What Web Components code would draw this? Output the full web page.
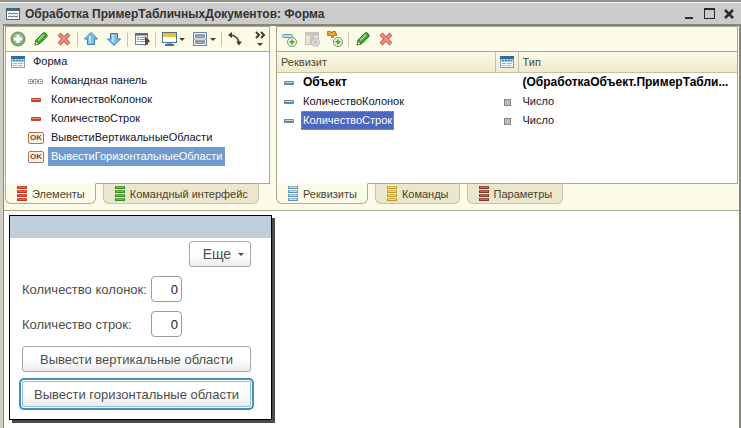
<!DOCTYPE html>
<html lang="ru">
<head>
<meta charset="utf-8">
<title>Обработка ПримерТабличныхДокументов: Форма</title>
<style>
  body {
    margin: 0;
    font-family: "Liberation Sans", Arial, sans-serif;
    font-size: 11px;
    background-color: #ffffff;
  }
</style>
</head>
<body>
<designer-window></designer-window>

<script>
const bars = (light, dark) => [1, 5, 9, 13].map(y =>
  `<rect x="3" y="${y - 1}" width="10" height="3" rx=".5" fill="${dark}"/>
   <rect x="4" y="${y - 0.5}" width="8" height="1.500" fill="${light}"/>`).join('')

const pencil = `
  <path d="M2 14l1-5 7-7q1.500-1 3 0.500t1 3L7 12.500z" fill="#3fa52c" stroke="#2b7420"/>
  <path d="M5 9.500l6-6" stroke="#8bdc6c" stroke-width="2"/>
  <path d="M2 14l1-4 3 3z" fill="#f4efcf" stroke="#2b7420" stroke-width=".7"/>`

const plus = `
  <circle cx="11" cy="11" r="4.500" fill="#eef5e4" stroke="#6f9668"/>
  <path d="M11 8.500v5M8.500 11h5" stroke="#5fae4b" stroke-width="2"/>`

const icons = {
  window: `<rect x="1.500" y="2.500" width="13" height="11" fill="#fff" stroke="#44667f"/>
    <path d="M2 4h12" stroke="#44667f" stroke-width="2"/>
    <path d="M3 8l2-1 2 1 2-1 2 1 2-1M3 11l2-1 2 1 2-1 2 1 2-1" fill="none" stroke="#44667f"/>`,
  form: `<rect x="1.500" y="2.500" width="13" height="11" fill="#f3f8fc" stroke="#7f9fbd"/>
    <rect x="1" y="2" width="14" height="3" fill="#316a9b"/>
    <rect x="2" y="5" width="12" height="3" fill="#a5c8e6"/>
    <path d="M3 6.500h10" stroke="#3977a8" stroke-dasharray="2 1"/>
    <path d="M3 9.500h4M8 9.500h5M3 11.500h4M8 11.500h4" stroke="#9ab4c9"/>`,
  add: `<circle cx="8" cy="8" r="7" fill="#83ad78" stroke="#68865f"/>
    <circle cx="8" cy="7" r="5" fill="#9bc391"/>
    <path d="M8 4v8M4 8h8" stroke="#fff" stroke-width="3"/>`,
  edit: pencil,
  remove: `<path d="M3 3l10 10M13 3L3 13" stroke="#cb5547" stroke-width="4"/>
    <path d="M3 3l10 10M13 3L3 13" stroke="#f09486" stroke-width="2"/>`,
  up: `<path d="M8 1.500l6.500 6.500h-3v5.500h-7V8h-3z" fill="#79bfe8" stroke="#397da9"/><path d="M7 5v7" stroke="#b9e2f6" stroke-width="2"/>`,
  down: `<path d="M8 14.500L14.500 8h-3V2.500h-7V8h-3z" fill="#79bfe8" stroke="#397da9"/><path d="M7 4v7" stroke="#b9e2f6" stroke-width="2"/>`,
  list: `<rect x="1.500" y="2.500" width="12" height="11" fill="#fff" stroke="#6b8299"/>
    <path d="M1 3.500h13" stroke="#4b6780" stroke-width="2"/>
    <path d="M3 6.500h2M6 6.500h6M3 8.500h2M6 8.500h6M3 10.500h2M6 10.500h6" stroke="#7b93aa"/>
    <path d="M11 5l5 5-5 5z" fill="#64442f"/>`,
  screen: `<rect x="1.500" y="1.500" width="14" height="10" fill="#fff" stroke="#526f8b"/>
    <rect x="2" y="2" width="13" height="4" fill="#e8c540"/>
    <path d="M6 12h5v1H6z" fill="#8aa6bd"/><path d="M4 14h9" stroke="#39739d" stroke-width="2"/>`,
  split: `<rect x="1.500" y="1.500" width="13" height="13" fill="#eef4f8" stroke="#7189a1"/>
    <rect x="3" y="3" width="10" height="4" fill="#9b9da8"/><rect x="3" y="9" width="10" height="4" fill="#9b9da8"/>
    <path d="M2 8h12" stroke="#a5b6c6"/>`,
  order: `<path d="M4 4q7 1 8 8" fill="none" stroke="#443c2d" stroke-width="1.500"/>
    <path d="M1 4l4-3v6zM12 14.500l-3-4h6z" fill="#443c2d"/>`,
  addAttribute: `<rect x="1.500" y="3.500" width="10" height="3" rx="1" fill="#c4dced" stroke="#6f94b3"/>${plus}`,
  addColumn: `<g opacity=".65"><rect x="1.500" y="1.500" width="13" height="12" fill="#dcd9d3" stroke="#aaa7a8"/>
    <path d="M2 3h12" stroke="#aaa" stroke-width="3"/><rect x="6" y="2" width="4" height="11" fill="#b4a6ad"/>
    <circle cx="11.500" cy="11.500" r="4" fill="#ddd" stroke="#999"/><path d="M11.500 9v5M9 11.500h5" stroke="#aaa" stroke-width="2"/></g>`,
  addParameter: `<path d="M.5 .5h3v1h2v-1h3v2h1v2h-3v2h-2v-2h-4v-1h1v-1h-1z" fill="#e9ac2c" stroke="#bf7415"/>${plus}`,
  panel: `<g fill="#f2f2f2" stroke="#8a8a8a"><rect x=".5" y="6.500" width="4" height="4" rx="1"/><rect x="5.500" y="6.500" width="4" height="4" rx="1"/><rect x="10.500" y="6.500" width="4" height="4" rx="1"/></g>
    <path d="M2 8.500h1M7 8.500h1M12 8.500h1" stroke="#666"/>`,
  field: `<rect x="3" y="6" width="10" height="4" rx="1" fill="#c14535"/><path d="M4 7.500h8" stroke="#f08c7c"/>`,
  attribute: `<rect x="3" y="6" width="10" height="4" rx="1" fill="#6388a8"/><path d="M4 7.500h8" stroke="#bfd6e6"/>`,
  square: `<rect x="5.500" y="5.500" width="6" height="6" fill="#bcbcbc" stroke="#858585"/>`,
  barsRed: bars('#f0604a', '#bf3426'),
  barsGreen: bars('#74c048', '#38832a'),
  barsBlue: bars('#c3e0ee', '#5f8fac'),
  barsYellow: bars('#f4d766', '#bd962f'),
  barsBrown: bars('#bd6d56', '#7c3a28'),
  more: `<path d="M6 1l3 3-3 3M11 1l3 3-3 3" fill="none" stroke="#443c2d" stroke-width="2"/><path d="M7 12h6l-3 3z" fill="#443c2d"/>`,
  minimize: `<path d="M4 12h8" stroke="#2b2b2b" stroke-width="2"/>`,
  maximize: `<rect x="3.500" y="3.500" width="10" height="9" fill="none" stroke="#2b2b2b"/><path d="M3 3h11" stroke="#2b2b2b" stroke-width="2"/>`,
  close: `<path d="M4 4l8 8M12 4l-8 8" stroke="#2b2b2b" stroke-width="2.500"/>`
}

class UiIcon extends HTMLElement {
  constructor () {
    super()
    this.shadow = this.attachShadow({ mode: 'open' })
  }

  connectedCallback () {
    this.shadow.innerHTML =
      /* html */`
      <style>
        :host {
          display: block;
          flex: none;
          width: 16px;
          height: 16px;
        }

        svg {
          display: block;
        }
      </style>
      <svg width="16" height="16" viewBox="0 0 16 16" fill="none" aria-hidden="true">${icons[this.getAttribute('name')]}</svg>
      `
  }
}

customElements.define('ui-icon', UiIcon)

class ToolButton extends HTMLElement {
  constructor () {
    super()
    this.shadow = this.attachShadow({ mode: 'open' })
  }

  connectedCallback () {
    this.shadow.innerHTML =
      /* html */`
      <style>
        :host {
          display: block;
          flex: none;
        }

        button {
          display: flex;
          align-items: center;
          gap: 2px;
          height: 24px;
          padding: 0 3px 0 4px;
          border: none;
          background: none;
        }

        .arrow {
          border: 3px solid transparent;
          border-top-color: #443c2d;
          border-bottom: none;
        }
      </style>
      <button type="button" aria-label="${this.getAttribute('label')}">
        <ui-icon name="${this.getAttribute('icon')}"></ui-icon>
        ${this.hasAttribute('menu') ? '<span class="arrow"></span>' : ''}
      </button>
      `
  }
}

customElements.define('tool-button', ToolButton)

class ToolBar extends HTMLElement {
  constructor () {
    super()
    this.shadow = this.attachShadow({ mode: 'open' })
  }

  connectedCallback () {
    this.shadow.innerHTML =
      /* html */`
      <style>
        :host {
          display: flex;
          align-items: center;
          height: 24px;
          border-bottom: 1px solid #aaa78f;
          background-color: #fcfbea;
        }

        ::slotted(hr) {
          width: 1px;
          height: 15px;
          margin: 0 2px;
          border: none;
          background-color: #c9c6b0;
        }

        ::slotted(.last) {
          margin-left: auto;
        }
      </style>
      <slot></slot>
      `
  }
}

customElements.define('tool-bar', ToolBar)

class ElementTree extends HTMLElement {
  constructor () {
    super()
    this.shadow = this.attachShadow({ mode: 'open' })

    this.data = [
      { icon: 'panel', name: 'Командная панель' },
      { icon: 'field', name: 'КоличествоКолонок' },
      { icon: 'field', name: 'КоличествоСтрок' },
      { icon: 'ok', name: 'ВывестиВертикальныеОбласти' },
      { icon: 'ok', name: 'ВывестиГоризонтальныеОбласти', selected: true }
    ]
  }

  connectedCallback () {
    this.shadow.innerHTML =
      /* html */`
      <style>
        :host {
          display: block;
          color: #14142a;
        }

        ul {
          margin: 0;
          padding: 0;
          list-style: none;
        }

        ul ul {
          padding-left: 18px;
        }

        .item {
          display: flex;
          align-items: center;
          gap: 4px;
          height: 19px;
          padding-left: 4px;
        }

        .name {
          padding: 0 3px;
          line-height: 19px;
          white-space: nowrap;
        }

        .selected {
          background-color: #6f9bd1;
          color: #ffffff;
        }

        .ok {
          box-sizing: border-box;
          width: 16px;
          height: 12px;
          border: 1px solid #a5785f;
          border-radius: 2px;
          background-color: #fdf1e4;
          color: #7a4630;
          font-size: 8px;
          font-weight: bold;
          line-height: 10px;
          text-align: center;
        }
      </style>
      <ul role="tree">
        <li role="treeitem" aria-expanded="true">
          <div class="item"><ui-icon name="form"></ui-icon><span class="name">Форма</span></div>
          <ul role="group"></ul>
        </li>
      </ul>
      `

    const group = this.shadow.querySelector('ul ul')

    this.data.forEach(node => {
      const item = document.createElement('li')
      item.className = 'item'
      item.setAttribute('role', 'treeitem')

      if (node.icon === 'ok') {
        item.innerHTML = '<span class="ok">OK</span>'
      } else {
        item.innerHTML = `<ui-icon name="${node.icon}"></ui-icon>`
      }

      const name = document.createElement('span')
      name.className = 'name'
      name.textContent = node.name
      if (node.selected) {
        name.classList.add('selected')
        item.setAttribute('aria-selected', 'true')
      }
      item.appendChild(name)
      group.appendChild(item)
    })
  }
}

customElements.define('element-tree', ElementTree)

class AttributeTable extends HTMLElement {
  constructor () {
    super()
    this.shadow = this.attachShadow({ mode: 'open' })

    this.data = [
      { name: 'Объект', type: '(ОбработкаОбъект.ПримерТабли...', main: true },
      { name: 'КоличествоКолонок', type: 'Число' },
      { name: 'КоличествоСтрок', type: 'Число', selected: true }
    ]
  }

  connectedCallback () {
    this.shadow.innerHTML =
      /* html */`
      <style>
        :host {
          display: block;
          color: #14142a;
        }

        table {
          width: 100%;
          table-layout: fixed;
          border-collapse: separate;
          border-spacing: 0;
        }

        .mark {
          width: 23px;
        }

        th {
          height: 20px;
          padding: 0 4px;
          border-right: 1px solid #c5c1a4;
          border-bottom: 1px solid #c5c1a4;
          background: linear-gradient(#fbf9e8, #efeacb);
          color: #4f4a35;
          font-weight: normal;
          text-align: left;
        }

        th:last-child {
          border-right: none;
        }

        td {
          height: 19px;
          padding: 0 4px;
          line-height: 19px;
          white-space: nowrap;
        }

        th.mark, td.mark {
          padding: 0 3px;
        }

        .cell {
          display: flex;
          align-items: center;
          gap: 4px;
        }

        .name {
          padding: 0 2px;
        }

        .main {
          color: #000000;
          font-size: 12px;
          font-weight: bold;
        }

        .selected .name {
          background-color: #4d68c0;
          color: #ffffff;
          outline: 1px dotted #b9a06a;
          outline-offset: -1px;
        }
      </style>
      <table>
        <colgroup><col><col class="mark"><col></colgroup>
        <thead>
          <tr>
            <th>Реквизит</th>
            <th class="mark" aria-label="Вид"><ui-icon name="form"></ui-icon></th>
            <th>Тип</th>
          </tr>
        </thead>
        <tbody></tbody>
      </table>
      `

    const body = this.shadow.querySelector('tbody')

    this.data.forEach(row => {
      const tr = document.createElement('tr')
      tr.innerHTML = `
        <td><div class="cell"><ui-icon name="attribute"></ui-icon><span class="name">${row.name}</span></div></td>
        <td class="mark">${row.main ? '' : '<ui-icon name="square"></ui-icon>'}</td>
        <td>${row.type}</td>`
      if (row.main) tr.classList.add('main')
      if (row.selected) tr.classList.add('selected')
      body.appendChild(tr)
    })
  }
}

customElements.define('attribute-table', AttributeTable)

class PaneTab extends HTMLElement {
  constructor () {
    super()
    this.shadow = this.attachShadow({ mode: 'open' })
  }

  connectedCallback () {
    this.shadow.innerHTML =
      /* html */`
      <style>
        :host {
          display: block;
        }

        button {
          display: flex;
          align-items: center;
          gap: 2px;
          height: 21px;
          padding: 0 10px 0 8px;
          border: 1px solid #c9c5a8;
          border-top-color: #aaa78f;
          border-radius: 0 0 6px 6px;
          background-color: #ebe7cc;
          color: #4a4330;
          font: inherit;
          white-space: nowrap;
        }

        :host([active]) button {
          border-color: #aaa78f;
          border-top-color: #fffef3;
          border-bottom-color: #c9a862;
          background-color: #fcfbea;
        }
      </style>
      <button type="button" role="tab" aria-selected="${this.hasAttribute('active')}">
        <ui-icon name="${this.getAttribute('icon')}"></ui-icon><slot></slot>
      </button>
      `
  }
}

customElements.define('pane-tab', PaneTab)

class EditorPane extends HTMLElement {
  constructor () {
    super()
    this.shadow = this.attachShadow({ mode: 'open' })
  }

  connectedCallback () {
    this.shadow.innerHTML =
      /* html */`
      <style>
        :host {
          display: block;
          min-width: 0;
        }

        .content {
          min-height: 156px;
          border: 1px solid #aaa78f;
          background-color: #ffffff;
        }

        .tabs {
          display: flex;
          gap: 7px;
          margin-top: -1px;
          padding-bottom: 6px;
        }
      </style>
      <div class="content"><slot></slot></div>
      <div class="tabs" role="tablist"><slot name="tab"></slot></div>
      `
  }
}

customElements.define('editor-pane', EditorPane)

class FormPreview extends HTMLElement {
  constructor () {
    super()
    this.shadow = this.attachShadow({ mode: 'open' })
  }

  connectedCallback () {
    this.shadow.innerHTML =
      /* html */`
      <style>
        :host {
          display: block;
          width: max-content;
          border: 1px solid #000000;
          background-color: #ffffff;
          box-shadow: 3px 3px 0 #4a4a4a;
          color: #4d4d4d;
          font-size: 13px;
        }

        header {
          height: 22px;
          background-color: #c0cddb;
        }

        form {
          display: grid;
          grid-template-columns: auto 1fr;
          align-items: center;
          gap: 9px 4px;
          padding: 3px 20px 12px 12px;
        }

        button {
          grid-column: 1 / -1;
          height: 26px;
          padding: 0 11px;
          border: 1px solid #a6a6a6;
          border-radius: 3px;
          background: linear-gradient(#ffffff 50%, #ececec);
          color: inherit;
          font: inherit;
        }

        .more {
          display: flex;
          align-items: center;
          justify-self: end;
          gap: 7px;
          padding: 0 6px 0 13px;
          font-size: 14px;
        }

        .more::after {
          content: "";
          border: 3px solid transparent;
          border-top-color: #4d4d4d;
          border-bottom: none;
        }

        .current {
          border-color: #8fc0dc;
          border-radius: 2px;
          box-shadow: 0 0 0 1px #ffffff, 0 0 0 3px #4490b8;
        }

        input {
          box-sizing: border-box;
          width: 31px;
          height: 26px;
          padding: 0 3px;
          border: 1px solid #9c9c9c;
          border-radius: 4px;
          color: #222222;
          font: inherit;
          text-align: right;
        }
      </style>
      <header></header>
      <form>
        <button type="button" class="more">Еще</button>
        <label for="columns">Количество колонок:</label>
        <input id="columns" type="text" value="0">
        <label for="rows">Количество строк:</label>
        <input id="rows" type="text" value="0">
        <button type="button">Вывести вертикальные области</button>
        <button type="button" class="current">Вывести горизонтальные области</button>
      </form>
      `
  }
}

customElements.define('form-preview', FormPreview)

class DesignerWindow extends HTMLElement {
  constructor () {
    super()
    this.shadow = this.attachShadow({ mode: 'open' })
  }

  connectedCallback () {
    this.shadow.innerHTML =
      /* html */`
      <style>
        :host {
          display: flex;
          flex-direction: column;
          min-height: 100vh;
          box-sizing: border-box;
          border-top: 2px solid #91918c;
        }

        .title {
          display: flex;
          align-items: center;
          height: 21px;
          padding: 0 2px 0 5px;
          border-top: 1px solid #f4f4f4;
          background-color: #cbcbcb;
          color: #333333;
        }

        h1 {
          flex: 1;
          min-width: 0;
          margin: 0;
          padding: 1px 4px 0;
          overflow: hidden;
          font-size: 12px;
          text-overflow: ellipsis;
          white-space: nowrap;
        }

        .title button {
          padding: 0 2px;
          border: none;
          background: none;
        }

        .frame {
          flex: 1;
          border: 2px solid #86867a;
          border-left: 1px solid #86867a;
          border-bottom: none;
          margin-left: 3px;
          box-shadow: -3px 0 0 #cfcfc3;
          background-color: #ffffff;
        }

        .panes {
          display: grid;
          grid-template-columns: 265fr 462fr;
          gap: 6px;
          padding: 0 1px;
          border-bottom: 1px solid #aaa78f;
          background-color: #fcfbea;
        }

        .canvas {
          padding: 4px 4px 8px 5px;
        }
      </style>

      <div class="title">
        <ui-icon name="window"></ui-icon>
        <h1>Обработка ПримерТабличныхДокументов: Форма</h1>
        <button type="button" aria-label="Свернуть"><ui-icon name="minimize"></ui-icon></button>
        <button type="button" aria-label="Развернуть"><ui-icon name="maximize"></ui-icon></button>
        <button type="button" aria-label="Закрыть"><ui-icon name="close"></ui-icon></button>
      </div>
      <div class="frame">
        <div class="panes">
          <editor-pane>
            <tool-bar>
              <tool-button icon="add" label="Добавить"></tool-button>
              <tool-button icon="edit" label="Изменить"></tool-button>
              <tool-button icon="remove" label="Удалить"></tool-button>
              <hr>
              <tool-button icon="up" label="Переместить вверх"></tool-button>
              <tool-button icon="down" label="Переместить вниз"></tool-button>
              <hr>
              <tool-button icon="list" label="Проверить"></tool-button>
              <hr>
              <tool-button icon="screen" label="Вид" menu></tool-button>
              <tool-button icon="split" label="Группировка" menu></tool-button>
              <hr>
              <tool-button icon="order" label="Порядок обхода"></tool-button>
              <tool-button class="last" icon="more" label="Еще"></tool-button>
            </tool-bar>
            <element-tree></element-tree>
            <pane-tab slot="tab" icon="barsRed" active>Элементы</pane-tab>
            <pane-tab slot="tab" icon="barsGreen">Командный интерфейс</pane-tab>
          </editor-pane>
          <editor-pane>
            <tool-bar>
              <tool-button icon="addAttribute" label="Добавить реквизит"></tool-button>
              <tool-button icon="addColumn" label="Добавить колонку"></tool-button>
              <tool-button icon="addParameter" label="Добавить параметр"></tool-button>
              <hr>
              <tool-button icon="edit" label="Изменить"></tool-button>
              <tool-button icon="remove" label="Удалить"></tool-button>
            </tool-bar>
            <attribute-table></attribute-table>
            <pane-tab slot="tab" icon="barsBlue" active>Реквизиты</pane-tab>
            <pane-tab slot="tab" icon="barsYellow">Команды</pane-tab>
            <pane-tab slot="tab" icon="barsBrown">Параметры</pane-tab>
          </editor-pane>
        </div>
        <div class="canvas">
          <form-preview></form-preview>
        </div>
      </div>
      `
  }
}

customElements.define('designer-window', DesignerWindow)
</script>
</body>
</html>
